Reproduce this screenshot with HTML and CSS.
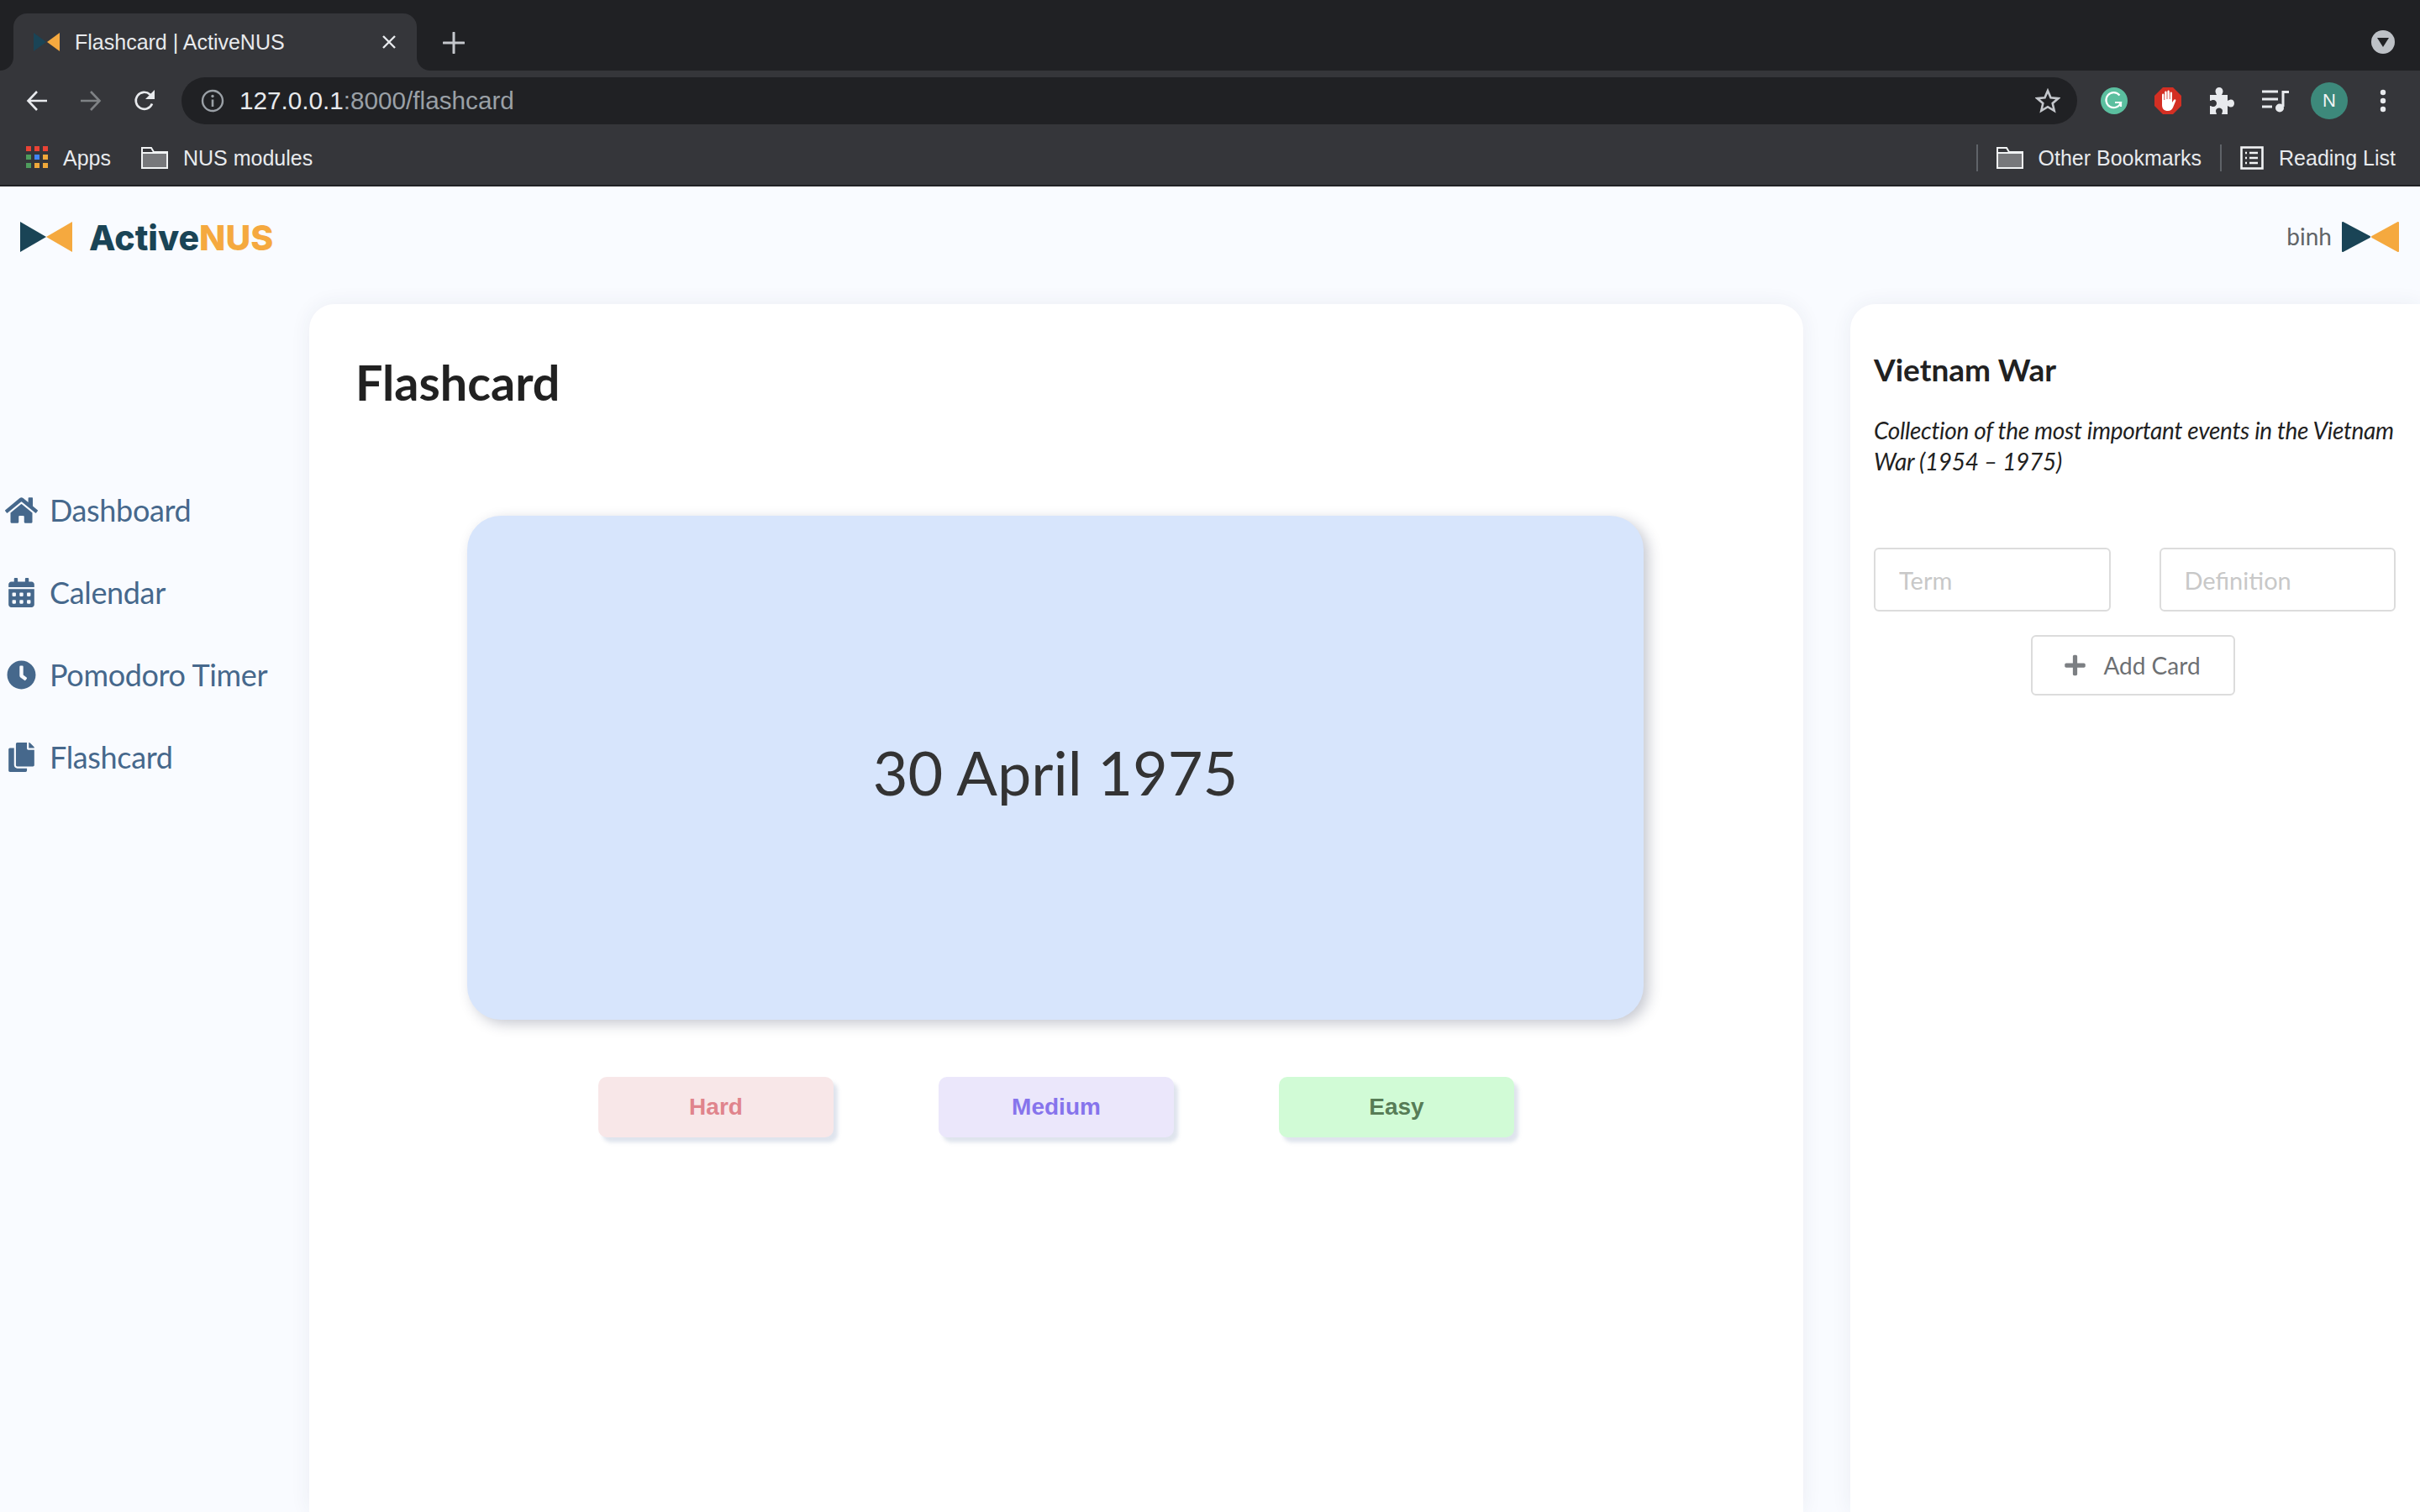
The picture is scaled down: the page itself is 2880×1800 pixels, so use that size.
FILE: index.html
```html
<!DOCTYPE html>
<html lang="en">
<head>
    <meta charset="UTF-8">
    <title>Flashcard | ActiveNUS</title>
    <link rel="stylesheet" href="styles.css">
</head>
<body>
    <div class="tab-strip">
        <div class="tab">
            <svg class="tab-icon" viewBox="0 0 32 24"><path fill="#1a4456" d="M0 1l15 11L0 23z"/><path fill="#f5a93f" d="M31 1L16 12l15 11z"/></svg>
            <span class="tab-title">Flashcard | ActiveNUS</span>
            <svg class="tab-close" viewBox="0 0 18 18"><path d="M2 2l14 14M16 2L2 16" stroke="#e8eaed" stroke-width="2.4" fill="none"/></svg>
        </div>
        <svg class="new-tab" viewBox="0 0 26 26"><path d="M13 1v24M1 13h24" stroke="#c4c7cc" stroke-width="3" fill="none" stroke-linecap="round"/></svg>
        <div class="tab-search">
            <svg viewBox="0 0 14 12" width="14" height="12"><path fill="#202124" d="M0 1h14L7 12z"/></svg>
        </div>
    </div>

    <div class="toolbar">
        <div class="tool-btn">
            <svg viewBox="0 0 26 26" width="26" height="26"><path d="M25 13H3M13 2L2.5 13 13 24" stroke="#e8eaed" stroke-width="2.6" fill="none"/></svg>
        </div>
        <div class="tool-btn">
            <svg viewBox="0 0 26 26" width="26" height="26"><path d="M1 13h22M13 2l10.500 11L13 24" stroke="#7f8285" stroke-width="2.6" fill="none"/></svg>
        </div>
        <div class="tool-btn">
            <svg viewBox="0 0 28 28" width="28" height="28"><path d="M23 17.500A10 10 0 1 1 20.500 6.500L24 10" stroke="#e8eaed" stroke-width="2.600" fill="none"/><path fill="#e8eaed" d="M26 1v11H15z"/></svg>
        </div>
        <div class="url-bar">
            <svg class="url-info" viewBox="0 0 28 28" width="28" height="28"><circle cx="14" cy="14" r="12" stroke="#9aa0a6" stroke-width="2.400" fill="none"/><path d="M14 12.500V21" stroke="#9aa0a6" stroke-width="2.600"/><circle cx="14" cy="8.500" r="1.700" fill="#9aa0a6"/></svg>
            <span class="url-text">127.0.0.1<span class="url-path">:8000/flashcard</span></span>
            <svg class="url-star" viewBox="0 0 30 30" width="30" height="30"><path d="M15 3l3.500 8.300 9 .8-6.800 5.900 2 8.800-7.700-4.600-7.700 4.600 2-8.800L2.500 12.100l9-.8z" stroke="#c4c7cc" stroke-width="2.600" fill="none"/></svg>
        </div>
        <div class="toolbar-right">
            <div class="tool-btn">
                <svg viewBox="0 0 32 32" width="32" height="32"><circle cx="16" cy="16" r="16" fill="#5bbf9f"/><path d="M22.500 9.500A9 9 0 1 0 24 18h-7" stroke="#fff" stroke-width="2.200" fill="none"/><path d="M24 18v5" stroke="#fff" stroke-width="2.200"/></svg>
            </div>
            <div class="tool-btn">
                <svg viewBox="0 0 32 32" width="32" height="32"><path fill="#d32f23" d="M10 0h12l10 10v12L22 32H10L0 22V10z"/><path fill="#fff" d="M9 9c0-2 2.400-2 2.400 0v6h.8V6c0-2 2.400-2 2.400 0v8h.8V5c0-2 2.400-2 2.400 0v9h.8V7c0-2 2.400-2 2.400 0v11l2-3c1.400-1.600 3 0 2.200 1.200L22 24c-1.200 2.500-3 4-6 4-4.500 0-7-2.500-7-7z"/></svg>
            </div>
            <div class="tool-btn">
                <svg viewBox="0 0 30 32" width="30" height="32"><path fill="#e8eaed" d="M1 9h8c-1-2-1.500-3-1.500-4.500C7.500 2 9.500 0 12 0s4.500 2 4.500 4.500C16.500 6 16 7 15 9h7v7c2-1 3-1.500 4-1.500 2.500 0 4 2 4 4.500s-1.500 4.500-4 4.500c-1 0-2-.5-4-1.500V32h-7c.5-2 1-3 1-4 0-2-2-3.500-4-3.500S8 26 8 28c0 1 .5 2 1 4H1V22c2 .5 3 1 4 1 2.500 0 4-2 4-4s-1.500-4-4-4c-1 0-2 .5-4 1z"/></svg>
            </div>
            <div class="tool-btn">
                <svg viewBox="0 0 32 28" width="32" height="28"><path d="M0 3h19M0 12h19M0 21h12" stroke="#e8eaed" stroke-width="3" fill="none"/><path d="M25 21V3.500h7" stroke="#e8eaed" stroke-width="3" fill="none"/><circle cx="21" cy="22.500" r="5" fill="#e8eaed"/></svg>
            </div>
            <div class="tool-btn">
                <div class="avatar">N</div>
            </div>
            <div class="tool-btn">
                <svg viewBox="0 0 8 28" width="8" height="28"><circle cx="4" cy="4" r="3.200" fill="#e8eaed"/><circle cx="4" cy="14" r="3.200" fill="#e8eaed"/><circle cx="4" cy="24" r="3.200" fill="#e8eaed"/></svg>
            </div>
        </div>
    </div>

    <div class="bookmarks">
        <div class="bookmark">
            <svg viewBox="0 0 26 28" width="26" height="28">
                <rect width="6" height="6" fill="#ea4335"/><rect x="10" width="6" height="6" fill="#ea4335"/><rect x="20" width="6" height="6" fill="#ea4335"/>
                <rect y="10" width="6" height="6" fill="#4f9d5d"/><rect x="10" y="10" width="6" height="6" fill="#4285f4"/><rect x="20" y="10" width="6" height="6" fill="#f0a93a"/>
                <rect y="20" width="6" height="6" fill="#4f9d5d"/><rect x="10" y="20" width="6" height="6" fill="#f0a93a"/><rect x="20" y="20" width="6" height="6" fill="#f0a93a"/>
            </svg>
            <span>Apps</span>
        </div>
        <div class="bookmark">
            <svg viewBox="0 0 32 26" width="32" height="26"><path fill="#77787b" d="M2 8h28v16H2z"/><path d="M1 25V1h11l3 5h16v19zM1 7h30" stroke="#f1f3f4" stroke-width="2" fill="none"/></svg>
            <span>NUS modules</span>
        </div>
        <div class="bookmarks-right">
            <div class="bookmark-sep"></div>
            <div class="bookmark">
                <svg viewBox="0 0 32 26" width="32" height="26"><path fill="#77787b" d="M2 8h28v16H2z"/><path d="M1 25V1h11l3 5h16v19zM1 7h30" stroke="#f1f3f4" stroke-width="2" fill="none"/></svg>
                <span>Other Bookmarks</span>
            </div>
            <div class="bookmark-sep"></div>
            <div class="bookmark">
                <svg viewBox="0 0 28 28" width="28" height="28"><rect x="1.500" y="1.500" width="25" height="25" stroke="#f1f3f4" stroke-width="2.600" fill="none"/><path d="M11 8h10M11 14h10M11 20h10M6 8h2M6 14h2M6 20h2" stroke="#f1f3f4" stroke-width="2.400"/></svg>
                <span>Reading List</span>
            </div>
        </div>
    </div>

    <div class="page">
        <header class="site-header">
            <div class="logo">
                <svg viewBox="0 0 62 36" width="62" height="36"><path fill="#1a4456" d="M0 0l31 18L0 36z"/><path fill="#f5a93f" d="M62 0L31 18l31 18z"/></svg>
                <span class="logo-text">Active<span class="logo-accent">NUS</span></span>
            </div>
            <div class="user">
                <span class="user-name">binh</span>
                <svg viewBox="0 0 68 36" width="68" height="36"><path fill="#1a4456" stroke="#1a4456" stroke-width="2" stroke-linejoin="round" d="M1 1l32 17L1 35z"/><path fill="#f5a93f" stroke="#f5a93f" stroke-width="2" stroke-linejoin="round" d="M67 1L36 18l31 17z"/></svg>
            </div>
        </header>

        <div class="content">
            <nav class="sidebar">
                <a class="nav-item">
                    <span class="nav-icon"><svg viewBox="0 0 576 512" width="39" height="35"><path d="M280.37 148.26L96 300.11V464a16 16 0 0 0 16 16l112.06-.29a16 16 0 0 0 15.92-16V368a16 16 0 0 1 16-16h64a16 16 0 0 1 16 16v95.64a16 16 0 0 0 16 16.05L464 480a16 16 0 0 0 16-16V300L295.67 148.26a12.19 12.19 0 0 0-15.3 0zM571.6 251.47L488 182.56V44.05a12 12 0 0 0-12-12h-56a12 12 0 0 0-12 12v72.61L318.47 43a48 48 0 0 0-61 0L4.34 251.47a12 12 0 0 0-1.6 16.9l25.5 31A12 12 0 0 0 45.15 301l235.22-193.74a12.19 12.19 0 0 1 15.3 0L530.9 301a12 12 0 0 0 16.9-1.6l25.5-31a12 12 0 0 0-1.7-16.93z"/></svg></span>
                    Dashboard
                </a>
                <a class="nav-item">
                    <span class="nav-icon"><svg viewBox="0 0 448 512" width="31" height="35"><path d="M0 464c0 26.5 21.5 48 48 48h352c26.5 0 48-21.5 48-48V192H0v272zm320-196c0-6.6 5.4-12 12-12h40c6.600 0 12 5.400 12 12v40c0 6.600-5.400 12-12 12h-40c-6.600 0-12-5.400-12-12v-40zm0 128c0-6.600 5.400-12 12-12h40c6.600 0 12 5.400 12 12v40c0 6.600-5.400 12-12 12h-40c-6.600 0-12-5.400-12-12v-40zM192 268c0-6.600 5.400-12 12-12h40c6.600 0 12 5.400 12 12v40c0 6.600-5.400 12-12 12h-40c-6.600 0-12-5.400-12-12v-40zm0 128c0-6.600 5.400-12 12-12h40c6.600 0 12 5.400 12 12v40c0 6.600-5.400 12-12 12h-40c-6.600 0-12-5.400-12-12v-40zM64 268c0-6.600 5.400-12 12-12h40c6.600 0 12 5.400 12 12v40c0 6.600-5.400 12-12 12H76c-6.600 0-12-5.400-12-12v-40zm0 128c0-6.600 5.400-12 12-12h40c6.600 0 12 5.400 12 12v40c0 6.600-5.400 12-12 12H76c-6.600 0-12-5.400-12-12v-40zM400 64h-48V16c0-8.800-7.200-16-16-16h-32c-8.800 0-16 7.200-16 16v48H160V16c0-8.800-7.200-16-16-16h-32c-8.800 0-16 7.200-16 16v48H48C21.500 64 0 85.500 0 112v48h448v-48c0-26.500-21.500-48-48-48z"/></svg></span>
                    Calendar
                </a>
                <a class="nav-item">
                    <span class="nav-icon"><svg viewBox="0 0 512 512" width="35" height="35"><path d="M256,8C119,8,8,119,8,256S119,504,256,504,504,393,504,256,393,8,256,8Zm92.49,313h0l-20,25a16,16,0,0,1-22.49,2.5h0l-67-49.72a40,40,0,0,1-15-31.23V112a16,16,0,0,1,16-16h32a16,16,0,0,1,16,16V256l58,42.5A16,16,0,0,1,348.49,321Z"/></svg></span>
                    Pomodoro Timer
                </a>
                <a class="nav-item">
                    <span class="nav-icon"><svg viewBox="0 0 448 512" width="31" height="35"><path d="M320 448v40c0 13.255-10.745 24-24 24H24c-13.255 0-24-10.745-24-24V120c0-13.255 10.745-24 24-24h72v296c0 30.879 25.121 56 56 56h168zm0-344V0H152c-13.255 0-24 10.745-24 24v368c0 13.255 10.745 24 24 24h272c13.255 0 24-10.745 24-24V128H344c-13.200 0-24-10.800-24-24zm120.971-31.029L375.029 7.029A24 24 0 0 0 358.059 0H352v96h96v-6.059a24 24 0 0 0-7.029-16.970z"/></svg></span>
                    Flashcard
                </a>
            </nav>

            <main class="main-card">
                <h1 class="page-title">Flashcard</h1>
                <div class="flashcard">30 April 1975</div>
                <div class="ratings">
                    <button class="rating rating-hard">Hard</button>
                    <button class="rating rating-medium">Medium</button>
                    <button class="rating rating-easy">Easy</button>
                </div>
            </main>

            <aside class="side-card">
                <h2 class="deck-title">Vietnam War</h2>
                <p class="deck-desc">Collection of the most important events in the Vietnam War (1954 – 1975)</p>
                <div class="card-inputs">
                    <input class="card-input" placeholder="Term">
                    <input class="card-input" placeholder="Definition">
                </div>
                <button class="add-card">
                    <svg viewBox="0 0 448 512" width="25" height="28"><path fill="#7c7f83" d="M416 208H272V64c0-17.670-14.330-32-32-32h-32c-17.670 0-32 14.330-32 32v144H32c-17.670 0-32 14.330-32 32v32c0 17.670 14.330 32 32 32h144v144c0 17.670 14.330 32 32 32h32c17.670 0 32-14.330 32-32V304h144c17.670 0 32-14.330 32-32v-32c0-17.670-14.330-32-32-32z"/></svg>
                    Add Card
                </button>
            </aside>
        </div>
    </div>
</body>
</html>
```

FILE: styles.css
```css
* {
    margin: 0;
    padding: 0;
    box-sizing: border-box;
}

html, body {
    height: 1800px;
    overflow: hidden;
}

body {
    display: flex;
    flex-direction: column;
    font-family: "Lato", sans-serif;
    background: #f9fbff;
}

/* browser chrome */
.tab-strip {
    display: flex;
    align-items: flex-end;
    height: 84px;
    padding-left: 16px;
    padding-right: 30px;
    background: #202124;
    font-family: "Liberation Sans", sans-serif;
}

.tab {
    position: relative;
    display: flex;
    align-items: center;
    width: 480px;
    height: 68px;
    padding: 0 24px 0 24px;
    background: #35363a;
    border-radius: 16px 16px 0 0;
}

.tab::before, .tab::after {
    content: '';
    position: absolute;
    bottom: 0;
    width: 16px;
    height: 16px;
}

.tab::before {
    left: -16px;
    background: radial-gradient(circle at 0 0, #202124 15.5px, #35363a 16.5px);
}

.tab::after {
    right: -16px;
    background: radial-gradient(circle at 100% 0, #202124 15.5px, #35363a 16.5px);
}

.tab-icon {
    width: 32px;
    height: 24px;
    flex-shrink: 0;
}

.tab-title {
    margin-left: 17px;
    color: #e8eaed;
    font-size: 25px;
    white-space: nowrap;
}

.tab-close {
    width: 18px;
    height: 18px;
    margin-left: auto;
}

.new-tab {
    width: 26px;
    height: 26px;
    margin: 0 0 20px 31px;
}

.tab-search {
    display: flex;
    align-items: center;
    justify-content: center;
    width: 28px;
    height: 28px;
    margin: 0 0 20px auto;
    background: #bdc1c6;
    border-radius: 50%;
}

.toolbar {
    display: flex;
    align-items: center;
    height: 72px;
    padding: 0 12px;
    background: #35363a;
}

.tool-btn {
    display: flex;
    align-items: center;
    justify-content: center;
    width: 64px;
    height: 56px;
}

.url-bar {
    display: flex;
    align-items: center;
    flex: 1;
    height: 56px;
    margin-left: 12px;
    padding: 0 20px 0 23px;
    background: #202124;
    border-radius: 28px;
    font-family: "Liberation Sans", sans-serif;
}

.url-text {
    margin-left: 18px;
    color: #e8eaed;
    font-size: 29.7px;
}

.url-path {
    color: #9aa0a6;
}

.url-star {
    margin-left: auto;
}

.toolbar-right {
    display: flex;
    align-items: center;
    margin-left: 12px;
}

.avatar {
    display: flex;
    align-items: center;
    justify-content: center;
    width: 44px;
    height: 44px;
    background: #3d897b;
    border-radius: 50%;
    color: #f1f3f4;
    font-family: "Liberation Sans", sans-serif;
    font-size: 22px;
}

.bookmarks {
    display: flex;
    align-items: center;
    gap: 36px;
    height: 66px;
    padding: 0 29px 0 31px;
    background: #35363a;
    border-bottom: 2px solid #202124;
    font-family: "Liberation Sans", sans-serif;
    color: #e8eaed;
    font-size: 25px;
}

.bookmark {
    display: flex;
    align-items: center;
    gap: 18px;
}

.bookmarks-right {
    display: flex;
    align-items: center;
    gap: 22px;
    margin-left: auto;
}

.bookmark-sep {
    width: 2px;
    height: 32px;
    background: #5f6368;
}

/* page */
.page {
    display: flex;
    flex-direction: column;
    flex: 1;
    min-height: 0;
}

.site-header {
    display: flex;
    align-items: center;
    justify-content: space-between;
    height: 140px;
    padding: 0 25px 20px 24px;
}

.logo {
    display: flex;
    align-items: center;
    gap: 20px;
}

.logo-text {
    margin-top: 2px;
    font-family: "Inter", sans-serif;
    font-weight: 800;
    font-size: 41px;
    color: #1a4456;
}

.logo-accent {
    color: #f5a93f;
}

.user {
    display: flex;
    align-items: center;
    gap: 12px;
}

.user-name {
    margin-bottom: 2px;
    color: #616467;
    font-size: 28px;
}

.content {
    display: flex;
    flex: 1;
    min-height: 0;
}

.sidebar {
    display: flex;
    flex-direction: column;
    gap: 50px;
    width: 368px;
    padding-top: 221px;
}

.nav-item {
    display: flex;
    align-items: center;
    height: 48px;
    color: #46688c;
    font-size: 36px;
    letter-spacing: -0.35px;
    white-space: nowrap;
}

.nav-icon {
    display: flex;
    align-items: center;
    justify-content: center;
    width: 50px;
    margin-right: 9px;
}

.nav-icon svg {
    fill: #46688c;
}

.main-card {
    display: flex;
    flex-direction: column;
    align-items: center;
    width: 1778px;
    padding: 60px 58px 0 56px;
    background: #fff;
    border-radius: 30px 30px 0 0;
    box-shadow: 0 0 24px rgba(40, 50, 80, 0.07);
}

.page-title {
    align-self: flex-start;
    margin-left: -1px;
    color: #212121;
    font-size: 57.5px;
    font-weight: 700;
    line-height: 66px;
}

.flashcard {
    display: flex;
    align-items: center;
    justify-content: center;
    width: 1400px;
    height: 600px;
    margin-top: 126px;
    padding-top: 9px;
    background: #d7e5fc;
    border-radius: 40px;
    box-shadow: 6px 5px 16px rgba(30, 40, 70, 0.25);
    color: #333;
    font-size: 72px;
}

.ratings {
    display: flex;
    gap: 125px;
    margin: 68px 0 0 2px;
}

.rating {
    width: 280px;
    height: 72px;
    border: none;
    border-radius: 10px;
    font-family: "Liberation Sans", sans-serif;
    font-size: 28px;
    font-weight: 700;
    box-shadow: 5px 6px 4px rgba(150, 165, 195, 0.3);
}

.rating-hard {
    background: #f8e7e8;
    color: #e0848c;
}

.rating-medium {
    background: #ebe7fb;
    color: #8674ec;
}

.rating-easy {
    background: #d1fbd6;
    color: #577c56;
}

.side-card {
    display: flex;
    flex-direction: column;
    flex: 1;
    margin-left: 56px;
    padding: 56px 29px 0 28px;
    background: #fff;
    border-radius: 30px 0 0 0;
    box-shadow: 0 0 24px rgba(40, 50, 80, 0.07);
}

.deck-title {
    color: #212121;
    font-size: 37px;
    font-weight: 700;
    line-height: 44px;
}

.deck-desc {
    margin-top: 32px;
    color: #212121;
    font-size: 28px;
    font-style: italic;
    letter-spacing: -0.3px;
    line-height: 37px;
}

.card-inputs {
    display: flex;
    gap: 58px;
    margin-top: 84px;
}

.card-input {
    flex: 1;
    width: 0;
    height: 76px;
    padding: 0 28px;
    border: 2px solid #dcdcdc;
    border-radius: 6px;
    font-family: "Lato", sans-serif;
    font-size: 29px;
    background: #fff;
}

.card-input::placeholder {
    color: #c8c8c8;
}

.add-card {
    display: flex;
    align-items: center;
    justify-content: center;
    gap: 21px;
    align-self: center;
    width: 243px;
    height: 72px;
    margin: 28px 5px 0 0;
    background: #fff;
    border: 2px solid #dcdcdc;
    border-radius: 6px;
    color: #6d7073;
    font-family: "Lato", sans-serif;
    font-size: 28px;
}
```
